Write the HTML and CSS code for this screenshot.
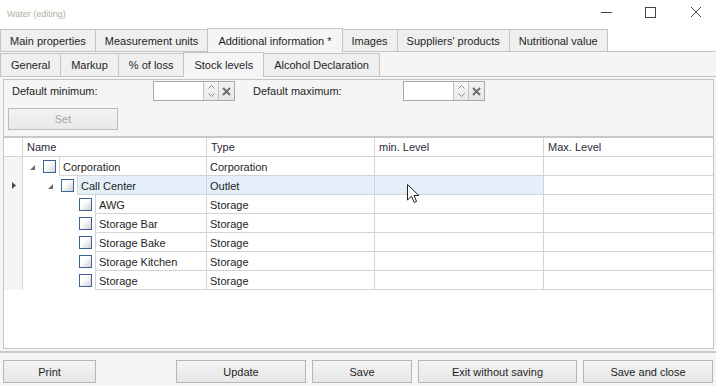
FILE: index.html
```html
<!DOCTYPE html>
<html lang="en">
<head>
    <meta charset="UTF-8">
    <title>Water (editing)</title>
    <link rel="stylesheet" href="styles.css">
</head>
<body>
<div class="window">
    <div class="titlebar">
        <span class="title">Water (editing)</span>
        <div class="controls">
            <svg width="44" height="28"><line x1="17" y1="12.5" x2="28" y2="12.5" stroke="#444" stroke-width="1"/></svg>
            <svg width="44" height="28"><rect x="17.5" y="7.5" width="10" height="10" fill="none" stroke="#444" stroke-width="1"/></svg>
            <svg width="44" height="28"><path d="M19 7 L29 17 M29 7 L19 17" stroke="#444" stroke-width="1"/></svg>
        </div>
    </div>

    <div class="tabs main-tabs">
        <div class="tab">Main properties</div>
        <div class="tab">Measurement units</div>
        <div class="tab active">Additional information *</div>
        <div class="tab">Images</div>
        <div class="tab">Suppliers' products</div>
        <div class="tab">Nutritional value</div>
    </div>

    <div class="page">
        <div class="tabs sub-tabs">
            <div class="tab">General</div>
            <div class="tab">Markup</div>
            <div class="tab">% of loss</div>
            <div class="tab active">Stock levels</div>
            <div class="tab">Alcohol Declaration</div>
        </div>

        <div class="subpage">
            <div class="content">
                <div class="levels-panel">
                    <div class="defaults-row">
                        <span class="field-label min-label">Default minimum:</span>
                        <div class="spin-edit">
                            <div class="spin-text"></div>
                            <div class="spin-arrows">
                                <svg width="7" height="4"><polyline points="0.5,3.5 3.5,0.5 6.5,3.5" fill="none" stroke="#8a8a8a"/></svg>
                                <svg width="7" height="4"><polyline points="0.5,0.5 3.5,3.5 6.5,0.5" fill="none" stroke="#8a8a8a"/></svg>
                            </div>
                            <div class="spin-clear">
                                <svg width="9" height="9"><path d="M1 1 L8 8 M8 1 L1 8" stroke="#6e6e6e" stroke-width="2"/></svg>
                            </div>
                        </div>
                        <span class="field-label max-label">Default maximum:</span>
                        <div class="spin-edit">
                            <div class="spin-text"></div>
                            <div class="spin-arrows">
                                <svg width="7" height="4"><polyline points="0.5,3.5 3.5,0.5 6.5,3.5" fill="none" stroke="#8a8a8a"/></svg>
                                <svg width="7" height="4"><polyline points="0.5,0.5 3.5,3.5 6.5,0.5" fill="none" stroke="#8a8a8a"/></svg>
                            </div>
                            <div class="spin-clear">
                                <svg width="9" height="9"><path d="M1 1 L8 8 M8 1 L1 8" stroke="#6e6e6e" stroke-width="2"/></svg>
                            </div>
                        </div>
                    </div>
                    <button class="set-btn" disabled>Set</button>
                </div>

                <div class="grid">
                    <div class="grid-header">
                        <div class="hcell indicator"></div>
                        <div class="hcell">Name</div>
                        <div class="hcell">Type</div>
                        <div class="hcell">min. Level</div>
                        <div class="hcell last">Max. Level</div>
                    </div>

                    <div class="row">
                        <div class="indicator"></div>
                        <div class="name-cell lvl0">
                            <span class="expander"><svg width="6" height="6"><polygon points="5,0 5,5 0,5" fill="#6a6a6a"/></svg></span>
                            <span class="check"></span>
                            <span class="node">Corporation</span>
                        </div>
                        <div class="cell">Corporation</div>
                        <div class="cell"></div>
                        <div class="cell last"></div>
                    </div>
                    <div class="row focused">
                        <div class="indicator"><svg width="4" height="7"><polygon points="0,0 4,3.5 0,7" fill="#4a4a4a"/></svg></div>
                        <div class="name-cell lvl1">
                            <span class="expander"><svg width="6" height="6"><polygon points="5,0 5,5 0,5" fill="#6a6a6a"/></svg></span>
                            <span class="check"></span>
                            <span class="node">Call Center</span>
                        </div>
                        <div class="cell">Outlet</div>
                        <div class="cell"></div>
                        <div class="cell last"></div>
                    </div>
                    <div class="row">
                        <div class="indicator"></div>
                        <div class="name-cell lvl2">
                            <span class="expander"></span>
                            <span class="check"></span>
                            <span class="node">AWG</span>
                        </div>
                        <div class="cell">Storage</div>
                        <div class="cell"></div>
                        <div class="cell last"></div>
                    </div>
                    <div class="row">
                        <div class="indicator"></div>
                        <div class="name-cell lvl2">
                            <span class="expander"></span>
                            <span class="check"></span>
                            <span class="node">Storage Bar</span>
                        </div>
                        <div class="cell">Storage</div>
                        <div class="cell"></div>
                        <div class="cell last"></div>
                    </div>
                    <div class="row">
                        <div class="indicator"></div>
                        <div class="name-cell lvl2">
                            <span class="expander"></span>
                            <span class="check"></span>
                            <span class="node">Storage Bake</span>
                        </div>
                        <div class="cell">Storage</div>
                        <div class="cell"></div>
                        <div class="cell last"></div>
                    </div>
                    <div class="row">
                        <div class="indicator"></div>
                        <div class="name-cell lvl2">
                            <span class="expander"></span>
                            <span class="check"></span>
                            <span class="node">Storage Kitchen</span>
                        </div>
                        <div class="cell">Storage</div>
                        <div class="cell"></div>
                        <div class="cell last"></div>
                    </div>
                    <div class="row">
                        <div class="indicator"></div>
                        <div class="name-cell lvl2">
                            <span class="expander"></span>
                            <span class="check"></span>
                            <span class="node">Storage</span>
                        </div>
                        <div class="cell">Storage</div>
                        <div class="cell"></div>
                        <div class="cell last"></div>
                    </div>
                </div>
            </div>
        </div>
    </div>

    <div class="footer">
        <button class="btn btn-print">Print</button>
        <button class="btn btn-update">Update</button>
        <button class="btn btn-save">Save</button>
        <button class="btn btn-exit">Exit without saving</button>
        <button class="btn btn-close">Save and close</button>
    </div>

    <!-- mouse pointer left over the grid -->
    <svg class="cursor" width="13" height="20">
        <polygon points="0.5,0.5 0.5,16 4.5,12.3 7.3,18.5 9.6,17.5 7,11.5 11.8,11.5" fill="#fff" stroke="#222" stroke-width="1" stroke-linejoin="round"/>
    </svg>
</div>
</body>
</html>
```

FILE: styles.css
```css
* {
    box-sizing: border-box;
}

body {
    margin: 0;
    font-family: "Liberation Sans", Arial, sans-serif;
    font-size: 11px;
    color: #1e1e1e;
    background-color: #fff;
}

.window {
    position: relative;
    width: 716px;
    height: 386px;
    overflow: hidden;
    display: flex;
    flex-direction: column;
}

/* Title bar */
.titlebar {
    height: 28px;
    flex: none;
    display: flex;
    align-items: center;
    justify-content: space-between;
    padding-left: 7px;
}

.title {
    font-size: 9px;
    color: #a7b39e;
}

.controls {
    display: flex;
}

.controls svg {
    display: block;
}

/* Tabs */
.tabs {
    display: flex;
    align-items: flex-end;
    flex: none;
}

.tab {
    display: flex;
    align-items: center;
    padding: 0 9px;
    border: 1px solid #c4c4c4;
    border-bottom: none;
    margin-right: -1px;
    background-color: #efefef;
    white-space: nowrap;
}

.tab.active {
    background-color: #f5f5f5;
    margin-bottom: -1px;
    z-index: 1;
}

.main-tabs {
    height: 23px;
}

.main-tabs .tab {
    height: 22px;
}

.main-tabs .tab.active {
    height: 24px;
    padding: 0 10px;
}

.sub-tabs {
    height: 24px;
}

.sub-tabs .tab {
    height: 23px;
    padding: 0 10px;
}

.sub-tabs .tab.active {
    height: 25px;
}

.page {
    flex: 1;
    display: flex;
    flex-direction: column;
    background-color: #f5f5f5;
    border-top: 1px solid #c4c4c4;
}

.subpage {
    flex: 1;
    border-top: 1px solid #c4c4c4;
    padding: 2px 2px 0 3px;
}

.content {
    height: 270px;
    display: flex;
    flex-direction: column;
    border: 1px solid #c4c4c4;
}

/* Default levels panel */
.levels-panel {
    height: 58px;
    flex: none;
    padding: 1px 0 0 4px;
    border-bottom: 2px solid #c8c8c8;
}

.defaults-row {
    display: flex;
    align-items: center;
    height: 20px;
    padding-left: 4px;
}

.field-label {
    flex: none;
}

.min-label {
    width: 141px;
}

.max-label {
    width: 150px;
    margin-left: 18px;
}

.spin-edit {
    display: flex;
    width: 82px;
    height: 20px;
    border: 1px solid #a9a9a9;
}

.spin-text {
    width: 50px;
    background-color: #fff;
    border-right: 1px solid #c2c2c2;
}

.spin-arrows {
    width: 15px;
    display: flex;
    flex-direction: column;
    align-items: center;
    justify-content: center;
    gap: 4px;
    background: linear-gradient(#f7f7f7, #e9e9e9);
    border-right: 1px solid #c2c2c2;
}

.spin-arrows svg,
.spin-clear svg {
    display: block;
}

.spin-clear {
    flex: 1;
    display: flex;
    align-items: center;
    justify-content: center;
    background: linear-gradient(#f3f3f3, #e6e6e6);
}

.set-btn {
    display: block;
    width: 110px;
    height: 22px;
    margin-top: 7px;
    border: 1px solid #bcbcbc;
    background: linear-gradient(#f2f2f2, #e9e9e9);
    font: inherit;
    color: #a6a6a6;
}

/* Grid */
.grid {
    flex: 1;
    background-color: #fff;
}

.grid-header,
.row {
    display: grid;
    grid-template-columns: 19px 184px 168px 169px 1fr;
    height: 19px;
}

.grid-header {
    border-bottom: 1px solid #d4d4d4;
}

.hcell {
    display: flex;
    align-items: center;
    padding-left: 4px;
    border-right: 1px solid #d4d4d4;
    color: #2a2a3a;
}

.hcell.last,
.cell.last {
    border-right: none;
}

.row .indicator {
    display: flex;
    align-items: center;
    padding-left: 8px;
    background-color: #f5f5f5;
    border-right: 1px solid #d4d4d4;
}

.grid-header .indicator {
    padding: 0;
}

.cell {
    display: flex;
    align-items: center;
    padding: 1px 0 0 3px;
    border-right: 1px solid #d4d4d4;
    border-bottom: 1px solid #d4d4d4;
}

.name-cell {
    display: flex;
    align-items: center;
    border-right: 1px solid #d4d4d4;
}

.lvl1 {
    padding-left: 18px;
}

.lvl2 {
    padding-left: 36px;
}

.expander {
    width: 18px;
    flex: none;
    display: flex;
    padding: 2px 0 0 7px;
}

.expander svg {
    display: block;
}

.check {
    flex: none;
    width: 13px;
    height: 13px;
    margin: 0 3px 0 2px;
    border: 1px solid #3b6397;
    background: linear-gradient(135deg, #ffffff 35%, #d2d2d2);
    box-shadow: inset 1px 1px 0 #fff;
}

.node {
    flex: 1;
    align-self: stretch;
    display: flex;
    align-items: center;
    padding: 1px 0 0 3px;
    border-left: 1px solid #d4d4d4;
    border-bottom: 1px solid #d4d4d4;
}

.row.focused .node,
.row.focused .cell {
    background-color: #e4eff9;
}

.row.focused .cell.last {
    background-color: #fff;
}

/* Bottom buttons */
.footer {
    height: 35px;
    flex: none;
    display: flex;
    gap: 6px;
    padding: 7px 3px 0 3px;
    border-top: 2px solid #c8c8c8;
    background-color: #f5f5f5;
}

.btn {
    height: 23px;
    border: 1px solid #b5b5b5;
    background: linear-gradient(#f3f3f3, #e7e7e7);
    font: inherit;
    color: #1e1e1e;
    padding: 0;
}

.btn-print {
    width: 93px;
}

.btn-update {
    width: 130px;
    margin-left: auto;
}

.btn-save {
    width: 100px;
}

.btn-exit {
    width: 159px;
}

.btn-close {
    width: 130px;
}

.cursor {
    position: absolute;
    left: 407px;
    top: 184px;
}
```
